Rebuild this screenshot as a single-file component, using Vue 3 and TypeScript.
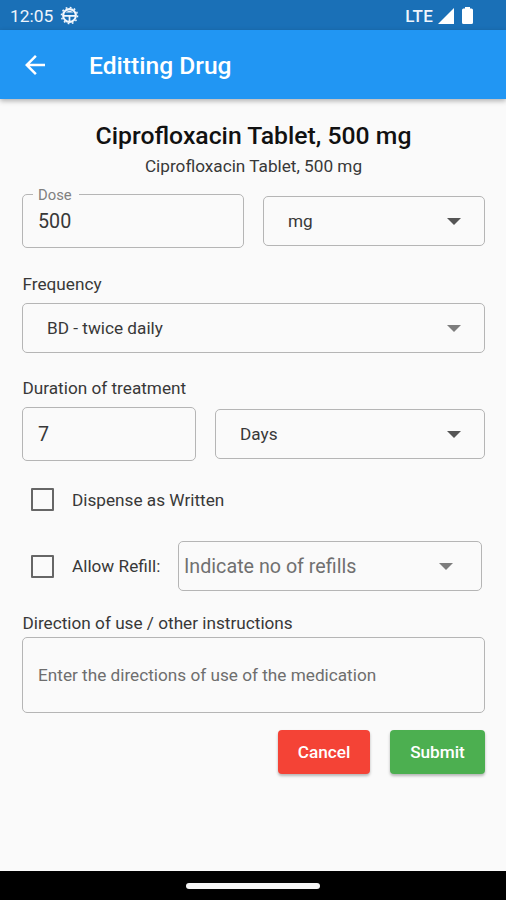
<script setup lang="ts">
import { ref } from 'vue'

const drugName = 'Ciprofloxacin Tablet, 500 mg'
const dose = ref('500')
const unit = ref('mg')
const frequency = ref('BD - twice daily')
const duration = ref('7')
const durationUnit = ref('Days')
const dispenseAsWritten = ref(false)
const allowRefill = ref(false)
</script>

<template>
  <div class="screen">
    <header class="status-bar">
      <span class="clock">12:05</span>
      <svg class="debug-icon" viewBox="0 0 20 20">
        <circle cx="10" cy="10" r="6.7" fill="none" stroke="#f2f7fd" stroke-width="2.2" />
        <circle cx="10" cy="10" r="8.5" fill="none" stroke="#f2f7fd" stroke-width="1.5" stroke-dasharray="1.9 2.55" />
        <path d="M3.5 10.4H16.5M10 10V17.5" fill="none" stroke="#f2f7fd" stroke-width="1.8" />
        <path d="M6 6.8Q10 3.4 14 6.8Z" fill="#f2f7fd" />
      </svg>
      <span class="network">LTE</span>
      <svg class="signal-icon" viewBox="0 0 16 16"><path d="M0 16L16 0V16Z" fill="#fff" /></svg>
      <svg class="battery-icon" viewBox="0 0 11 17">
        <path d="M3 0H8V1.5H9.5Q11 1.5 11 3V15.5Q11 17 9.5 17H1.5Q0 17 0 15.5V3Q0 1.5 1.5 1.5H3Z" fill="#fff" />
      </svg>
    </header>

    <nav class="app-bar">
      <svg class="back-icon" viewBox="4 4 16 16">
        <path d="M20 11H7.83l5.59-5.59L12 4l-8 8 8 8 1.41-1.41L7.83 13H20v-2z" fill="#fff" />
      </svg>
      <h1 class="title">Editting Drug</h1>
    </nav>

    <main class="form">
      <h2 class="drug-name">{{ drugName }}</h2>
      <p class="drug-detail">{{ drugName }}</p>

      <div class="row dose-row">
        <div class="field dose">
          <span class="floating-label">Dose</span>
          <span class="value">{{ dose }}</span>
        </div>
        <div class="select unit">
          <span class="option">{{ unit }}</span>
          <svg class="caret" viewBox="0 0 14 7"><path d="M0 0H14L7 7Z" /></svg>
        </div>
      </div>

      <div class="label frequency-label">Frequency</div>
      <div class="select frequency">
        <span class="option">{{ frequency }}</span>
        <svg class="caret muted" viewBox="0 0 14 7"><path d="M0 0H14L7 7Z" /></svg>
      </div>

      <div class="label duration-label">Duration of treatment</div>
      <div class="row duration-row">
        <div class="field duration"><span class="value">{{ duration }}</span></div>
        <div class="select days">
          <span class="option">{{ durationUnit }}</span>
          <svg class="caret" viewBox="0 0 14 7"><path d="M0 0H14L7 7Z" /></svg>
        </div>
      </div>

      <div class="check-row dispense" @click="dispenseAsWritten = !dispenseAsWritten">
        <span class="checkbox" :class="{ checked: dispenseAsWritten }"></span>
        <span class="check-text dispense-text">Dispense as Written</span>
      </div>

      <div class="check-row refill">
        <span class="checkbox" :class="{ checked: allowRefill }" @click="allowRefill = !allowRefill"></span>
        <span class="check-text refill-text">Allow Refill:</span>
        <div class="select refills">
          <span class="placeholder">Indicate no of refills</span>
          <svg class="caret muted" viewBox="0 0 14 7"><path d="M0 0H14L7 7Z" /></svg>
        </div>
      </div>

      <div class="label direction-label">Direction of use / other instructions</div>
      <div class="field directions">
        <span class="hint">Enter the directions of use of the medication</span>
      </div>

      <div class="actions">
        <button class="button cancel" type="button">Cancel</button>
        <button class="button submit" type="button">Submit</button>
      </div>
    </main>

    <footer class="nav-bar"><span class="handle"></span></footer>
  </div>
</template>

<style>
body {
  margin: 0;
}
</style>

<style scoped>
* {
  box-sizing: border-box;
}
.screen {
  display: flex;
  flex-direction: column;
  width: 506px;
  height: 900px;
  overflow: hidden;
  background: #fafafa;
  color: #383838;
  font-family: Roboto, 'Liberation Sans', sans-serif;
  font-size: 17.2px;
  white-space: nowrap;
}
.status-bar {
  display: flex;
  align-items: center;
  flex: none;
  height: 30px;
  padding: 1px 33px 0 10px;
  background: #1a70b7;
  color: #eef5fc;
}
.clock {
  width: 50px;
  font-size: 17.4px;
}
.debug-icon {
  width: 19px;
  height: 19px;
}
.network {
  margin-left: auto;
  font-size: 17px;
  font-weight: 500;
  letter-spacing: 0.2px;
}
.signal-icon {
  width: 16px;
  height: 16px;
  margin-left: 5px;
}
.battery-icon {
  width: 11px;
  height: 17px;
  margin-left: 8px;
}
.app-bar {
  z-index: 1;
  display: flex;
  align-items: center;
  flex: none;
  height: 69px;
  padding: 0 25px;
  background: #2196f3;
  box-shadow: 0 2px 5px rgba(0, 0, 0, 0.3);
  color: #fff;
}
.back-icon {
  width: 20px;
  height: 20px;
}
.title {
  margin: 2px 0 0 44px;
  font-size: 24.6px;
  font-weight: 500;
}
.form {
  flex: 1;
  padding: 22px 21px 0 22px;
}
.drug-name {
  height: 30px;
  margin: 0;
  color: #111;
  font-size: 24.75px;
  font-weight: 500;
  line-height: 30px;
  text-align: center;
}
.drug-detail {
  height: 24px;
  margin: 3px 0 0;
  font-size: 17.2px;
  line-height: 24px;
  text-align: center;
}
.row {
  display: flex;
  align-items: center;
  gap: 19px;
}
.dose-row {
  height: 54px;
  margin-top: 16px;
}
.field,
.select {
  border: 1.5px solid #b5b5b5;
  border-radius: 5px;
}
.field {
  position: relative;
  display: flex;
  align-items: center;
  height: 54px;
  padding-left: 15px;
}
.field .value {
  font-size: 19.7px;
}
.dose {
  width: 222px;
}
.duration {
  width: 174px;
}
.floating-label {
  position: absolute;
  top: -9px;
  left: 10px;
  padding: 0 7px 0 5px;
  background: #fafafa;
  color: #808080;
  font-size: 14.8px;
  line-height: 19px;
}
.select {
  display: flex;
  align-items: center;
  justify-content: space-between;
  height: 50px;
  padding: 0 23px 0 24px;
}
.unit,
.days {
  flex: 1;
}
.caret {
  width: 14px;
  height: 7px;
  fill: #555;
}
.caret.muted {
  fill: #7d7d7d;
}
.label {
  height: 22px;
  padding-left: 0.5px;
  line-height: 22px;
}
.frequency-label {
  margin-top: 25px;
}
.frequency {
  margin-top: 8px;
}
.duration-label {
  margin-top: 24px;
}
.duration-row {
  height: 54px;
  margin-top: 8px;
}
.check-row {
  display: flex;
  align-items: center;
  padding-left: 9px;
}
.checkbox {
  width: 23px;
  height: 23px;
  border: 2px solid #666;
  border-radius: 1px;
}
.checkbox.checked {
  background: #2196f3;
}
.check-text {
  margin-left: 18px;
}
.dispense {
  height: 23px;
  margin-top: 27px;
}
.refill {
  height: 50px;
  margin-top: 30px;
}
.refill-text {
  width: 88px;
}
.refills {
  width: 304px;
  margin-left: 18px;
  padding: 0 28px 0 5px;
}
.placeholder {
  color: #707070;
  font-size: 19.7px;
}
.direction-label {
  margin-top: 21px;
}
.directions {
  height: 76px;
  margin-top: 3px;
}
.hint {
  color: #6e6e6e;
}
.actions {
  display: flex;
  justify-content: flex-end;
  gap: 20px;
  margin-top: 17px;
}
.button {
  height: 44px;
  padding: 0;
  border: 0;
  border-radius: 4px;
  box-shadow: 0 2px 3px rgba(0, 0, 0, 0.28);
  color: #fff;
  font-family: inherit;
  font-size: 17.2px;
  font-weight: 500;
}
.cancel {
  width: 92px;
  background: #f44336;
}
.submit {
  width: 95px;
  background: #4caf50;
}
.nav-bar {
  display: flex;
  justify-content: center;
  flex: none;
  height: 29px;
  padding-top: 12px;
  background: #000;
}
.handle {
  width: 134px;
  height: 6px;
  border-radius: 3px;
  background: #f5f5f5;
}
</style>
